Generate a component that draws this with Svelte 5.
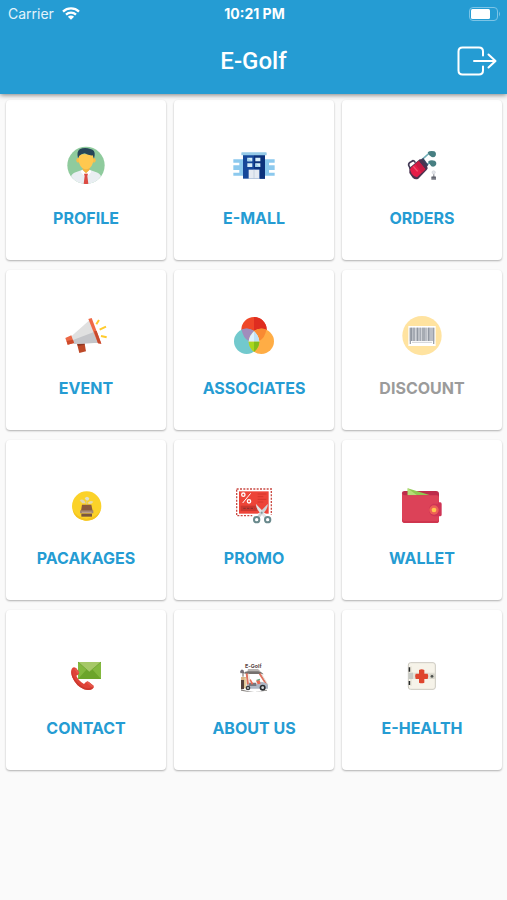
<script lang="ts">
	type Tile = {
		id: string;
		label: string;
		viewBox: string;
		disabled?: boolean;
	};

	const tiles: Tile[] = [
		{ id: 'profile', label: 'PROFILE', viewBox: '36 21 144 144' },
		{ id: 'mall', label: 'E-MALL', viewBox: '45 6 144 144' },
		{ id: 'orders', label: 'ORDERS', viewBox: '39 6 144 144' },
		{ id: 'event', label: 'EVENT', viewBox: '36 21 144 144' },
		{ id: 'associates', label: 'ASSOCIATES', viewBox: '45 21 144 144' },
		{ id: 'discount', label: 'DISCOUNT', viewBox: '39 21 144 144', disabled: true },
		{ id: 'packages', label: 'PACAKAGES', viewBox: '36 6 144 144' },
		{ id: 'promo', label: 'PROMO', viewBox: '45 21 144 144' },
		{ id: 'wallet', label: 'WALLET', viewBox: '549 21 144 144' },
		{ id: 'contact', label: 'CONTACT', viewBox: '36 6 144 144' },
		{ id: 'about', label: 'ABOUT US', viewBox: '540 6 144 144' },
		{ id: 'health', label: 'E-HEALTH', viewBox: '204 36 144 144' }
	];

	const barcode = [78, 84, 88, 95, 101, 105, 112, 118, 122, 129, 134, 140];
</script>

<div class="app">
	<header>
		<div class="status-bar">
			<div class="carrier">
				<span>Carrier</span>
				<svg class="wifi" viewBox="0 0 18 13" aria-hidden="true">
					<path d="M1 4.6C5.4 0.4 12.6 0.4 17 4.6" />
					<path d="M4 7.6C6.8 5 11.2 5 14 7.6" />
					<path class="fill" d="M5.9 9.7C7.8 8.1 10.2 8.1 12.1 9.7L9 12.8Z" />
				</svg>
			</div>
			<span class="time">10:21 PM</span>
			<svg class="battery" viewBox="0 0 32 14" aria-hidden="true">
				<rect class="shell" x="0.5" y="0.5" width="28" height="13" rx="3.5" />
				<rect class="charge" x="2" y="2" width="19" height="10" rx="1.5" />
				<path class="cap" d="M30 4.5Q32 7 30 9.5Z" />
			</svg>
		</div>

		<div class="nav-bar">
			<h1>E-Golf</h1>
			<button class="logout" type="button" aria-label="Log out">
				<svg viewBox="0 0 40 30" aria-hidden="true">
					<path d="M26 9.5V5.5Q26 1.5 22 1.5H5.5Q1.5 1.5 1.5 5.5V24.5Q1.5 28.5 5.5 28.5H22Q26 28.5 26 24.5V20.5" />
					<path d="M17 15H38M31.5 8.5L38.5 15L31.5 21.5" />
				</svg>
			</button>
		</div>
	</header>

	<main>
		{#each tiles as tile (tile.id)}
			<button class="tile" type="button" disabled={tile.disabled}>
				<svg class="icon" viewBox={tile.viewBox} aria-hidden="true">
					{#if tile.id === 'profile'}
						<circle cx="108" cy="91" r="56" fill="#8fcb9d" />
						<path d="M63 124Q66 115 79 111L98 104H118L137 111Q150 115 153 124Q137 147 108 147Q79 147 63 124Z" fill="#e9eef2" />
						<path d="M98 94H119V105L108 117L98 105Z" fill="#f3b23e" />
						<path d="M96 104L108 115L120 104L124 111L115 121L108 115L101 121L92 111Z" fill="#fff" />
						<path d="M102 116H114L112 123L115 146Q108 148 101 146L104 123Z" fill="#dc4b43" />
						<ellipse cx="84" cy="76" rx="5" ry="7" fill="#f8bd49" />
						<ellipse cx="132" cy="76" rx="5" ry="7" fill="#f8bd49" />
						<path d="M86 58H130V77Q128 94 115 101Q108 104 101 101Q88 94 86 77Z" fill="#ffc84f" />
						<path d="M84 70Q79 50 89 43Q104 35 121 42Q136 45 134 61L132 71L128 61Q116 62 104 55Q93 58 88 62Z" fill="#264457" />
					{:else if tile.id === 'mall'}
						<path d="M55 58H84V107H55V98H73V90H55V76H73V68H55Z" fill="#8cc9ee" />
						<path d="M179 58H150V107H179V98H162V90H179V76H162V68H179Z" fill="#8cc9ee" />
						<rect x="84" y="45" width="66" height="71" fill="#15479a" />
						<path d="M117 45H150V116H134V86H117Z" fill="#0c327c" />
						<rect x="79" y="37" width="76" height="9" rx="2" fill="#94c9e7" />
						<path d="M97 53H112V64H97ZM121 53H136V64H121ZM97 70H112V81H97ZM121 70H136V81H121Z" fill="#d8effa" />
						<path d="M97 53L112 64H97ZM121 70L136 81H121Z" fill="#a5d4ed" />
						<path d="M101 89H133V116H101Z" fill="#e5eaf2" />
						<path d="M117 89V116" stroke="#b8c5d8" stroke-width="2" />
					{:else if tile.id === 'orders'}
						<path d="M111 59L133 39M124 75L137 66" fill="none" stroke="#71aeb7" stroke-width="5" />
						<path d="M128 37Q135 31 148 34Q155 38 152 47Q148 53 140 51L132 45ZM129 65Q137 58 149 62Q156 66 153 75Q148 82 139 79Z" fill="#477f82" />
						<path d="M106 59L115 54L130 75L122 83Z" fill="#3c425d" />
						<path d="M73 84L104 58Q110 57 115 64L127 80Q130 86 125 90L100 116Q91 121 83 113L73 99Z" fill="#4c3351" />
						<path d="M74 86L101 63L121 88L96 112Q87 111 80 101Z" fill="#e51c48" />
						<path d="M91 72L101 63L121 88L110 99Z" fill="#c71b43" />
						<path d="M76 86L71 76Q70 69 77 66L84 62Q89 62 91 68" fill="none" stroke="#423a56" stroke-width="5" />
						<path d="M85 79L98 94" stroke="#f4516f" stroke-width="4" />
						<circle cx="146" cy="97" r="5" fill="#e3e6ea" stroke="#b7bac2" stroke-width="1" />
						<path d="M145 103H148V110H153V119H139V110H145Z" fill="#777a83" />
						<path d="M140 111H152" stroke="#3d414b" stroke-width="2" />
					{:else if tile.id === 'event'}
						<path d="M80 112L103 111L108 139L88 144Z" fill="#bd4928" />
						<path d="M80 112L103 111L104 119L84 123Z" fill="#8e3825" />
						<path d="M65 93L118 46L148 113L71 117Z" fill="#e0e0e0" />
						<path d="M69 105L134 80L148 113L71 117Z" fill="#c4c5c9" />
						<path d="M46 99L64 91L72 114L53 119Z" fill="#eb6745" />
						<path d="M50 108L69 104L72 114L53 119Z" fill="#cc4b2c" />
						<path d="M115 42L125 39L154 116L144 115Z" fill="#ef6845" />
						<path d="M132 79L140 78L154 116L144 115Z" fill="#c6492e" />
						<path d="M139 58L147 45M149 74L168 65M153 93L170 97" fill="none" stroke="#ffcb2d" stroke-width="6" />
					{:else if tile.id === 'associates'}
						<circle cx="117" cy="74" r="38" fill="#ef4728" />
						<path d="M117 36A38 38 0 0 1 117 112Z" fill="#df2d20" />
						<circle cx="95" cy="109" r="38" fill="#72c9cd" />
						<circle cx="139" cy="109" r="38" fill="#ffad45" />
						<path d="M80 74Q101 65 117 79Q103 91 101 108Q84 98 80 74Z" fill="#a18cbc" />
						<path d="M154 74Q133 65 117 79Q131 91 133 108Q150 98 154 74Z" fill="#f98a32" />
						<path d="M117 79Q103 91 101 110H133Q131 91 117 79Z" fill="#def2fc" />
						<path d="M117 79Q131 91 133 110H117Z" fill="#bde1f4" />
						<path d="M101 110H133Q132 129 117 140Q102 129 101 110Z" fill="#a9d71f" />
						<path d="M117 110H133Q132 129 117 140Z" fill="#83bc1c" />
					{:else if tile.id === 'discount'}
						<circle cx="111" cy="92" r="59" fill="#ffe3a0" />
						<rect x="70" y="63" width="82" height="60" fill="#fff" />
						<rect x="74" y="68" width="74" height="40" fill="#d0d3d8" />
						{#each barcode as x, i (x)}
							<rect x={x} y="68" width={i % 3 === 0 ? 4 : 2} height="40" fill="#9298a2" />
						{/each}
						<path d="M74 68H78V117H74ZM144 68H148V117H144Z" fill="#9ca1aa" />
						<path d="M82 112H140" stroke="#b4b8bf" stroke-width="3" stroke-dasharray="4 2" />
					{:else if tile.id === 'packages'}
						<circle cx="110" cy="78" r="44" fill="#fbd229" />
						<path d="M67 87Q73 118 105 122Q145 123 154 84Q146 111 110 116Q80 114 67 87Z" fill="#f5c31c" />
						<path d="M89 61Q95 55 103 62L107 70H97Z" fill="#dfd6b5" />
						<path d="M104 55Q111 46 118 55Q118 61 110 63Z" fill="#dfe0ca" />
						<path d="M113 69Q119 59 130 65Q126 73 117 72Z" fill="#e3d9b0" />
						<path d="M110 60V75" stroke="#d8ca88" stroke-width="3" />
						<path d="M96 74H124L128 93H93Z" fill="#8c5b3d" />
						<path d="M90 91H130V100H90Z" fill="#a18472" />
						<path d="M94 101H126V110H94Z" fill="#79553f" />
						<path d="M96 97H125" stroke="#c4a48d" stroke-width="3" />
					{:else if tile.id === 'promo'}
						<rect x="65" y="42" width="104" height="80" fill="#fff" stroke="#c94b44" stroke-width="4" stroke-dasharray="6 4" />
						<rect x="72" y="49" width="89" height="67" fill="#ed4438" />
						<rect x="77" y="92" width="50" height="16" fill="#c9372f" />
						<path d="M85 100H119" stroke="#852f2d" stroke-width="3" stroke-dasharray="7 4" />
						<path d="M128 57H154M128 65H145M128 73H154M128 81H145" stroke="#d6372d" stroke-width="3" />
						<path d="M83 84L107 55" stroke="#fff" stroke-width="3" />
						<circle cx="85" cy="59" r="5" fill="none" stroke="#fff" stroke-width="4" />
						<circle cx="102" cy="79" r="5" fill="none" stroke="#fff" stroke-width="4" />
						<path d="M112 119H124L136 112L146 112L156 119H174V142H112Z" fill="#fff" />
						<path d="M123 87Q122 99 135 114L149 130L156 126L141 106Z" fill="#e1e5e6" />
						<path d="M158 87Q160 99 146 114L132 130L125 126L140 106Z" fill="#ccd3d5" />
						<circle cx="125" cy="134" r="8" fill="#fff" stroke="#69898c" stroke-width="6" />
						<circle cx="158" cy="134" r="8" fill="#fff" stroke="#69898c" stroke-width="6" />
						<circle cx="140" cy="113" r="3" fill="#85979c" />
					{:else if tile.id === 'wallet'}
						<path d="M561 55Q561 48 569 48H663Q672 48 672 57V84H561Z" fill="#bd2c4b" />
						<path d="M578 40L646 61H578Z" fill="#91c951" />
						<path d="M578 40L606 61H578Z" fill="#b4df77" />
						<path d="M561 54Q563 61 570 61H665Q672 61 672 68V137Q672 144 664 144H570Q561 144 561 135Z" fill="#dc4258" />
						<path d="M561 128Q563 138 570 138H666Q672 138 672 132V136Q672 144 664 144H570Q561 144 561 135Z" fill="#cf354e" />
						<path d="M655 86H669V82H676Q680 82 680 87V119Q680 124 675 124H657Q642 121 642 105Q642 90 655 86Z" fill="#cf3455" />
						<circle cx="657" cy="105" r="14" fill="#ed6156" />
						<circle cx="657" cy="105" r="7" fill="#ffc54d" />
					{:else if tile.id === 'contact'}
						<rect x="84" y="36" width="69" height="51" fill="#83b83e" />
						<path d="M84 36H153L118 67Z" fill="#a6c867" />
						<path d="M84 87L109 59L118 66L128 59L153 87Z" fill="#6ca42a" />
						<path d="M84 36L118 66L153 36" fill="none" stroke="#659d2b" stroke-width="2" />
						<path d="M65 57Q69 49 78 54L87 66Q89 71 83 75L79 77Q85 92 102 102L107 97Q112 92 117 96L131 107Q134 112 127 117Q117 123 102 118Q78 108 67 82Q61 66 65 57Z" fill="#df4338" />
						<path d="M66 60Q67 88 96 109Q111 119 127 112L127 117Q117 123 102 118Q78 108 67 82Q62 68 66 60Z" fill="#cc392f" />
						<path d="M78 54L88 68L82 71L73 57ZM108 97L113 94L130 107L126 112Z" fill="#e5584b" />
					{:else if tile.id === 'about'}
						<!-- Sign lettering above the cart roof -->
						<text x="610" y="53" text-anchor="middle">E-Golf</text>
						<path d="M594 57H624L633 65H592Z" fill="#b9b4b1" />
						<path d="M581 70Q584 64 594 64H625Q635 65 641 73L632 72H590Z" fill="#76706d" />
						<path d="M590 70L595 112M629 71L649 102" fill="none" stroke="#df725f" stroke-width="6" />
						<path d="M596 71L600 101M634 71L654 105" fill="none" stroke="#e9dfd6" stroke-width="3" />
						<path d="M592 103H621L629 95Q646 95 654 104V116H588Z" fill="#aeb7c5" />
						<path d="M598 98H619V108H596Z" fill="#77777f" />
						<path d="M602 87L610 101L605 104L599 91ZM618 92L628 88L632 101L623 103Z" fill="#e66a55" />
						<path d="M620 91L630 88" stroke="#69a782" stroke-width="4" />
						<path d="M588 81H573V115H590Z" fill="#d9b285" />
						<path d="M573 90H582V117H573Z" fill="#56413c" />
						<path d="M583 83H588V114H583Z" fill="#e6cf9e" />
						<path d="M573 61H579V80M571 68H582" fill="none" stroke="#675c59" stroke-width="3" />
						<circle cx="576" cy="64" r="5" fill="#777078" />
						<path d="M573 118Q610 132 651 119V122Q610 129 573 122Z" fill="#8c8885" />
						<circle cx="594" cy="114" r="7" fill="#393b3f" />
						<circle cx="638" cy="113" r="9" fill="#292b30" />
						<circle cx="594" cy="114" r="3" fill="#c4c9cc" />
						<circle cx="638" cy="113" r="4" fill="#d5d9dc" />
					{:else}
						<rect x="235" y="68" width="81" height="80" rx="7" fill="#f6f3e9" stroke="#ccc9c0" stroke-width="3" />
						<path d="M236 98H315V117H236Z" fill="#e4e2d8" />
						<path d="M235 98H249V117H235Z" fill="#c7c9c4" />
						<path d="M236 82H241V95H236ZM236 123H241V135H236Z" fill="#282b2a" />
						<path d="M243 79V98M243 117V138" stroke="#e2dfd0" stroke-width="3" />
						<path d="M267 90Q275 86 283 90V101H293Q297 109 293 117H283V128Q275 132 267 128V117H257Q253 109 257 101H267Z" fill="#df452e" />
						<rect x="300" y="101" width="14" height="15" rx="2" fill="#d2d1c6" />
						<circle cx="306" cy="109" r="4" fill="#4d504d" />
					{/if}
				</svg>
				<span class="label">{tile.label}</span>
			</button>
		{/each}
	</main>
</div>

<style>
	:global(body) {
		margin: 0;
		background: #fafafa;
	}

	.app {
		min-height: 100vh;
		background: #fafafa;
		font-family: Inter, 'Liberation Sans', sans-serif;
	}

	header {
		position: relative;
		background: #259cd3;
		color: #fff;
		box-shadow: 0 1px 5px rgba(0, 0, 0, 0.5);
	}

	/* Status bar */
	.status-bar {
		display: grid;
		grid-template-columns: 1fr auto 1fr;
		align-items: center;
		height: 27px;
		padding: 0 6px 0 8px;
		font-size: 14px;
		line-height: 20px;
	}

	.carrier {
		display: flex;
		align-items: center;
		gap: 8px;
		color: #e3f3fb;
	}

	.time {
		font-weight: 700;
	}

	.wifi {
		width: 18px;
		height: 13px;
		fill: none;
		stroke: #fff;
		stroke-width: 2.3;
	}

	.wifi .fill {
		fill: #fff;
		stroke: none;
	}

	.battery {
		justify-self: end;
		width: 32px;
		height: 14px;
	}

	.shell {
		fill: none;
		stroke: #7cc4e6;
	}

	.charge {
		fill: #fff;
	}

	.cap {
		fill: #7cc4e6;
	}

	/* Title bar */
	.nav-bar {
		display: grid;
		grid-template-columns: 1fr auto 1fr;
		align-items: center;
		height: 67px;
		padding: 0 10px;
	}

	h1 {
		grid-column: 2;
		margin: 0;
		font-family: Roboto, 'Liberation Sans', sans-serif;
		font-size: 24px;
		font-weight: 500;
		line-height: 32px;
	}

	.logout {
		justify-self: end;
		display: flex;
		padding: 0;
		border: 0;
		background: none;
		color: inherit;
	}

	.logout svg {
		width: 40px;
		height: 30px;
		fill: none;
		stroke: currentColor;
		stroke-width: 2;
		stroke-linecap: round;
		stroke-linejoin: round;
	}

	/* Menu */
	main {
		display: grid;
		grid-template-columns: repeat(3, 1fr);
		gap: 10px 8px;
		padding: 6px 5px 6px 6px;
	}

	.tile {
		display: flex;
		flex-direction: column;
		align-items: center;
		gap: 18px;
		padding: 42px 0 32px;
		border: 0;
		border-radius: 4px;
		background: #fff;
		box-shadow: 0 1px 2px rgba(0, 0, 0, 0.3);
		color: #259cd3;
		font-family: inherit;
	}

	.tile:disabled {
		color: #9b9b9b;
	}

	.icon {
		width: 48px;
		height: 48px;
	}

	.icon text {
		fill: #5b4a49;
		font-size: 16px;
		font-weight: 700;
	}

	.label {
		font-size: 16px;
		font-weight: 700;
		line-height: 20px;
	}
</style>
